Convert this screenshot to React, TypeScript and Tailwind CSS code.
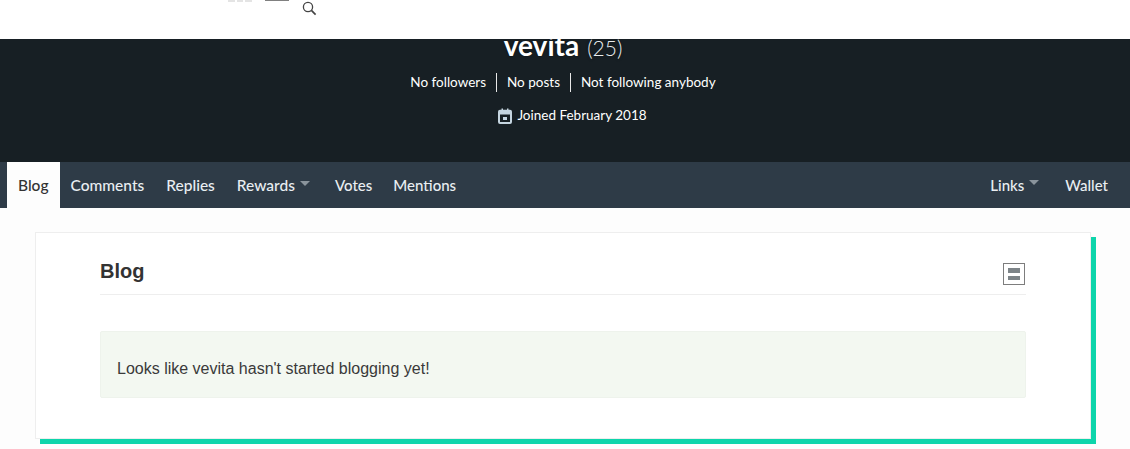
import React from "react";

const src = "font-['Lato','Noto_Sans',sans-serif]";
const Caret = () => (
  <span className="ml-[5px] mb-[5px] inline-block h-0 w-0 border-x-[5px] border-t-[5px] border-x-transparent border-t-[#8a949c]" />
);

export default function App() {
  return (
    <div className="h-[449px] w-[1130px] overflow-hidden bg-[#fdfdfd]">
      <header className="flex h-[39px] overflow-hidden bg-white pl-[228px]">
        <div className="flex h-[2px] w-[24px] gap-[2px]">
          <span className="h-full flex-1 bg-[#e4e4e4]" />
          <span className="h-full flex-1 bg-[#e4e4e4]" />
          <span className="h-full flex-1 bg-[#e4e4e4]" />
        </div>
        <span className="ml-[13px] h-px w-[24px] bg-[#808080]" />
        <svg className="ml-[13px] mt-[1px] h-[15px] w-[15px]" viewBox="0 0 15 15" fill="none" stroke="#444444">
          <circle cx="6" cy="6" r="4.6" strokeWidth="1.3" />
          <path d="M9.4 9.4 13.6 13.6" strokeWidth="1.7" />
        </svg>
      </header>
      <section className={`h-[123px] overflow-hidden bg-[#171f24] pr-[4px] text-center text-white ${src}`}>
        <h1 className="-mt-[13px] flex h-[38px] items-baseline justify-center text-[28px] font-bold leading-[38px] [text-shadow:0_0_3px_#00000080]">
          vevita
          <span className="ml-[8px] text-[21px] font-light text-[#e8ecee]">(25)</span>
        </h1>
        <div className="mt-[9px] flex h-[19px] justify-center text-[13.5px] leading-[19px]">
          <span className="border-r border-[#e8e8e8] pr-[10px]">No followers</span>
          <span className="border-r border-[#e8e8e8] px-[10px]">No posts</span>
          <span className="pl-[10px]">Not following anybody</span>
        </div>
        <div className="mt-[14px] flex h-[19px] items-center justify-center pl-[18px] text-[13.5px] leading-[19px]">
          <svg className="mr-[4px] h-[16px] w-[16px]" viewBox="0 0 16 16" fill="#c5d5e0">
            <path d="M3 1.800h1.500V.5H6v1.300h4V.5h1.500v1.300H13A2 2 0 0 1 15 3.800v10.200a2 2 0 0 1-2 2H3a2 2 0 0 1-2-2V3.800a2 2 0 0 1 2-2Zm0 4.700v7.500h10V6.500H3Zm3 2.500h4v3H6V9Z" fillRule="evenodd" />
          </svg>
          Joined February 2018
        </div>
      </section>
      <nav className={`flex h-[46px] justify-between bg-[#2e3b47] pl-[7px] pr-[11px] text-[15.5px] font-medium text-[#e9eef2] ${src}`}>
        <ul className="flex">
          <li className="flex items-center bg-[#fdfdfd] px-[11px] pt-[2px] text-[#333333]">Blog</li>
          <li className="flex items-center px-[11px] pt-[2px]">Comments</li>
          <li className="flex items-center px-[11px] pt-[2px]">Replies</li>
          <li className="flex items-center px-[11px] pt-[2px]">Rewards<Caret /></li>
          <li className="flex items-center pl-[14px] pr-[11px] text-[15px]">Votes</li>
          <li className="flex items-center pl-[10px] text-[15px]">Mentions</li>
        </ul>
        <ul className="flex text-[15px]">
          <li className="flex items-center px-[11px]">Links<Caret /></li>
          <li className="flex items-center pl-[15px] pr-[11px]">Wallet</li>
        </ul>
      </nav>
      <main className="ml-[35px] mt-[24px] h-[207px] w-[1056px] border border-[#eeeeee] bg-white px-[64px] pt-[24px] shadow-[5px_5px_0_#0ed5ab] font-['Liberation_Sans',sans-serif]">
        <div className="flex h-[38px] items-start justify-between border-b border-[#eeeeee]">
          <h2 className="text-[20px] font-bold leading-[29px] text-[#333333]">Blog</h2>
          <span className="mr-px mt-[6px] flex h-[22px] w-[22px] flex-col items-center justify-center gap-[3px] border border-[#7d7d7d]">
            <span className="h-[5px] w-[12px] bg-[#7d8488]" />
            <span className="h-[4px] w-[12px] bg-[#7d8488]" />
          </span>
        </div>
        <div className="mt-[36px] flex h-[67px] items-center rounded-[2px] border border-[#eef3ec] bg-[#f3f8f1] pl-[16px] pt-[8px] text-[16px] text-[#3a3a3a]">
          Looks like vevita hasn't started blogging yet!
        </div>
      </main>
    </div>
  );
}
